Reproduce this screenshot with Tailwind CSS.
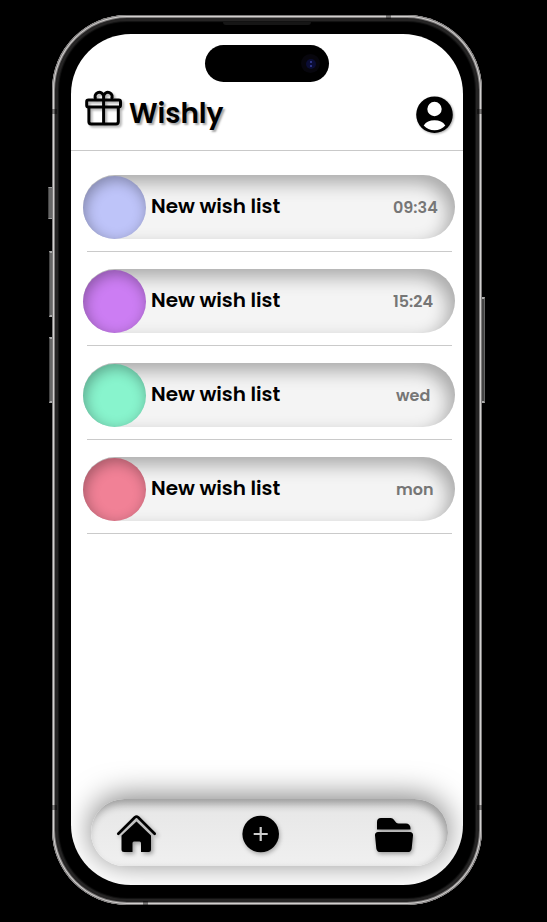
<!DOCTYPE html>
<html lang="en">
<head>
<meta charset="utf-8">
<title>Wishly</title>
<script src="https://cdn.jsdelivr.net/npm/@tailwindcss/browser@4"></script>
</head>
<body class="bg-black font-['Poppins','Inter',sans-serif] overflow-hidden">
<div class="relative w-[547px] h-[922px] pl-[52px] pt-[15px]">
  <!-- side buttons -->
  <i class="absolute left-[48px] top-[187px] w-[4px] h-[32px] border-y border-y-[#999] border-l border-l-[#444] bg-[#666]"></i>
  <i class="absolute left-[49px] top-[251px] w-[3px] h-[66px] border-y-2 border-y-[#aaa] border-l border-l-[#444] bg-[#666]"></i>
  <i class="absolute left-[49px] top-[337px] w-[3px] h-[66px] border-y-2 border-y-[#aaa] border-l border-l-[#444] bg-[#666]"></i>
  <i class="absolute left-[482px] top-[297px] w-[3px] h-[106px] border-y-2 border-y-[#aaa] border-r border-r-[#666] bg-[#444]"></i>

  <!-- phone body -->
  <div class="relative w-[430px] h-[890px] rounded-[75px] bg-black pl-[19px] pt-[19px] shadow-[inset_0_0_0_1px_#7d7b7b,inset_0_0_0_2px_#d2d0cf,inset_0_0_0_3px_#807e7e,inset_0_0_0_6px_#252424,inset_0_0_1px_7px_#151515]">
    <i class="absolute left-[171px] top-[7px] w-[88px] h-[3px] rounded-b-[3px] bg-[#161616]"></i>
    <i class="absolute left-[334px] top-[0px] w-[5px] h-[4px] bg-black/40"></i>
    <i class="absolute left-[91px] bottom-[0px] w-[5px] h-[4px] bg-black/40"></i>
    <i class="absolute left-0 top-[94px] w-[5px] h-[5px] bg-black/40"></i>
    <i class="absolute right-0 top-[94px] w-[5px] h-[5px] bg-black/40"></i>
    <i class="absolute left-0 top-[790px] w-[5px] h-[5px] bg-black/40"></i>
    <i class="absolute right-0 top-[790px] w-[5px] h-[5px] bg-black/40"></i>

    <!-- screen -->
    <main class="relative w-[392px] h-[851px] rounded-[60px] bg-white overflow-hidden flex flex-col">
      <div class="absolute left-[134px] top-[11px] w-[124px] h-[37px] rounded-full bg-black">
        <span class="absolute right-[9px] top-[9px] size-[19px] rounded-full bg-[#07060d] flex items-center justify-center">
          <span class="size-[10px] rounded-full bg-[#0b0d35] flex flex-col items-center justify-center gap-[2px]"><i class="size-[2px] bg-[#2c3486]"></i><i class="size-[2px] bg-[#2c3486]"></i></span>
        </span>
      </div>
      <header class="h-[117px] shrink-0 border-b border-[#c9c9c9] flex items-end pl-[12px] pr-[8px] pb-[14px]">
        <svg class="w-[42px] h-[42px] mb-[8px] drop-shadow-[2px_2px_1px_rgba(0,0,0,0.3)]" viewBox="0 0 42 42" fill="none" stroke="#000" stroke-width="3" stroke-linejoin="round">
          <rect x="3.700" y="14" width="33.800" height="7" rx="1.800"/>
          <path d="M5.900 21v14.800a2.200 2.200 0 0 0 2.200 2.200h25a2.200 2.200 0 0 0 2.200-2.200V21M20.600 14v24"/>
          <path d="M20.600 13.500v-3.300a4.300 4.300 0 1 0-7.700 3M20.600 10.200a4.300 4.300 0 1 1 7.700 3"/>
        </svg>
        <h1 class="ml-[4px] mb-[2px] text-[28px] leading-[40px] font-semibold tracking-[-0.1px] [text-shadow:2px_2px_2px_rgba(0,0,0,0.35)]">Wishly</h1>
        <svg class="ml-auto w-[42px] h-[42px] drop-shadow-[1px_1px_1px_rgba(0,0,0,0.35)]" viewBox="0 0 42 42">
          <circle cx="21.500" cy="20.700" r="18.300"/>
          <circle cx="21.500" cy="15" r="7.200" fill="#fff"/>
          <path d="M10.700 31.500c2.300-3.600 6-5.200 10.800-5.200s8.500 1.600 10.800 5.200c-2.700 3.100-6.500 4.800-10.800 4.800s-8.100-1.700-10.800-4.800z" fill="#fff"/>
        </svg>
      </header>

      <ul class="flex flex-col">
        <li class="h-[94px] pt-[24px] px-[12px] w-[396px]">
          <div class="h-[64px] w-[372px] rounded-full bg-[#f4f4f4] flex items-center shadow-[inset_-6px_8px_18px_rgba(0,0,0,0.31)]">
            <i class="size-[63px] shrink-0 rounded-full bg-[#bec4f9] shadow-[inset_2px_4px_14px_rgba(0,0,0,0.32)]"></i>
            <span class="ml-[5px] w-[242px] text-[20px] font-semibold tracking-[-0.05px] pb-[2px]">New wish list</span>
            <time class="text-[16px] font-semibold text-[#767676] pt-[2px]">09:34</time>
          </div>
          <hr class="mt-[12px] ml-[4px] w-[365px] border-[#cacaca]">
        </li>
        <li class="h-[94px] pt-[24px] px-[12px] w-[396px]">
          <div class="h-[64px] w-[372px] rounded-full bg-[#f4f4f4] flex items-center shadow-[inset_-6px_8px_18px_rgba(0,0,0,0.31)]">
            <i class="size-[63px] shrink-0 rounded-full bg-[#cc7df3] shadow-[inset_2px_4px_14px_rgba(0,0,0,0.32)]"></i>
            <span class="ml-[5px] w-[242px] text-[20px] font-semibold tracking-[-0.05px] pb-[2px]">New wish list</span>
            <time class="text-[16px] font-semibold text-[#767676] pt-[2px]">15:24</time>
          </div>
          <hr class="mt-[12px] ml-[4px] w-[365px] border-[#cacaca]">
        </li>
        <li class="h-[94px] pt-[24px] px-[12px] w-[396px]">
          <div class="h-[64px] w-[372px] rounded-full bg-[#f4f4f4] flex items-center shadow-[inset_-6px_8px_18px_rgba(0,0,0,0.31)]">
            <i class="size-[63px] shrink-0 rounded-full bg-[#88f4cd] shadow-[inset_2px_4px_14px_rgba(0,0,0,0.32)]"></i>
            <span class="ml-[5px] w-[245px] text-[20px] font-semibold tracking-[-0.05px] pb-[2px]">New wish list</span>
            <time class="text-[16px] font-semibold text-[#767676] pt-[2px]">wed</time>
          </div>
          <hr class="mt-[12px] ml-[4px] w-[365px] border-[#cacaca]">
        </li>
        <li class="h-[94px] pt-[24px] px-[12px] w-[396px]">
          <div class="h-[64px] w-[372px] rounded-full bg-[#f4f4f4] flex items-center shadow-[inset_-6px_8px_18px_rgba(0,0,0,0.31)]">
            <i class="size-[63px] shrink-0 rounded-full bg-[#f18196] shadow-[inset_2px_4px_14px_rgba(0,0,0,0.32)]"></i>
            <span class="ml-[5px] w-[245px] text-[20px] font-semibold tracking-[-0.05px] pb-[2px]">New wish list</span>
            <time class="text-[16px] font-semibold text-[#767676] pt-[2px]">mon</time>
          </div>
          <hr class="mt-[12px] ml-[4px] w-[365px] border-[#cacaca]">
        </li>
      </ul>

      <nav class="mt-auto mb-[19px] ml-[20px] w-[357px] h-[67px] rounded-full bg-gradient-to-b from-[#e6e6e6] to-[#f0f0f0] flex items-center pl-[25px] shadow-[0_-3px_30px_rgba(0,0,0,0.5),inset_-3px_5px_9px_rgba(0,0,0,0.33)]">
        <svg class="w-[42px] h-[40px] overflow-visible drop-shadow-[2px_2px_2px_rgba(0,0,0,0.35)]" viewBox="0 0 42 40">
          <path d="M2.300 20.800 18.900 4.300a2.500 2.500 0 0 1 3.200 0L38.700 20.800" fill="none" stroke="#000" stroke-width="2.700" stroke-linecap="round"/>
          <path d="M20.500 8.600 35 22.600V36.500a2.500 2.500 0 0 1-2.500 2.500H25V30a1.500 1.500 0 0 0-1.500-1.500h-5.500A1.500 1.500 0 0 0 16.500 30v9H8a2.500 2.500 0 0 1-2.500-2.500V22.600z"/>
        </svg>
        <svg class="w-[38px] h-[38px] overflow-visible ml-[83px] mt-[2px] drop-shadow-[1px_2px_2px_rgba(0,0,0,0.3)]" viewBox="0 0 38 38">
          <circle cx="19.700" cy="19" r="18.300"/>
          <path d="M19.700 12v14M12.700 19h14" stroke="#ccc" stroke-width="2.200"/>
        </svg>
        <svg class="w-[40px] h-[38px] overflow-visible ml-[95px] mt-[3px] drop-shadow-[1px_2px_2px_rgba(0,0,0,0.35)]" viewBox="0 0 40 38">
          <path d="M3 14.500V7a4 4 0 0 1 4-4h9.500c4 0 4.500 5.500 8 5.500H32a4.500 4.500 0 0 1 4.500 4.500v1.500z"/>
          <path d="M4 17h32a3 3 0 0 1 3 3.400l-1.300 13a4.200 4.200 0 0 1-4.200 3.600h-27a4.200 4.200 0 0 1-4.200-3.600L1 20.400A3 3 0 0 1 4 17z"/>
        </svg>
      </nav>
    </main>
  </div>
</div>
</body>
</html>
